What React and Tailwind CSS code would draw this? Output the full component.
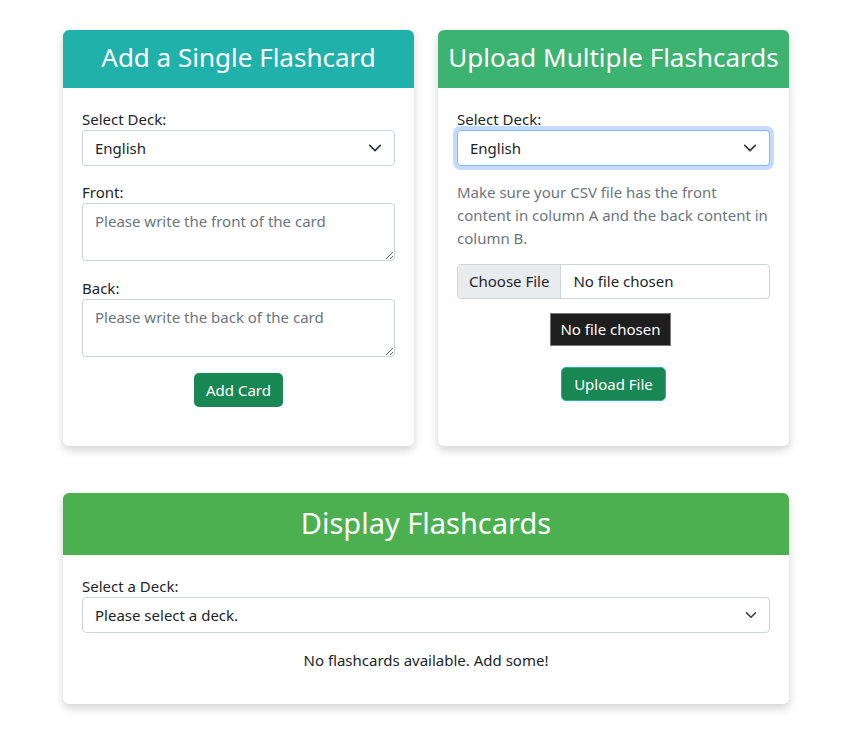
import { useState } from "react";

const font = { fontFamily: '"Noto Sans", "Noto Sans CJK KR", sans-serif' };

function Chevron({ small }) {
  return (
    <svg
      width={small ? 12 : 14}
      height={small ? 12 : 14}
      viewBox="0 0 16 16"
      className="pointer-events-none absolute right-[13px] top-1/2 -translate-y-1/2"
    >
      <path d="M2 5l6 6 6-6" fill="none" stroke="#343a40" strokeWidth="2" strokeLinecap="round" strokeLinejoin="round" />
    </svg>
  );
}

function Select({ value, focused, small }) {
  return (
    <div className="relative">
      <div
        className={
          "h-[36px] w-full rounded-[4px] border bg-white pl-[12px] text-[15px] leading-[34px] text-[#212529] " +
          (focused ? "border-[#86b7fe] shadow-[0_0_0_4px_rgba(13,110,253,0.25)]" : "border-[#ced4da]")
        }
      >
        {value}
      </div>
      <Chevron small={small} />
    </div>
  );
}

function Header({ title, color, big }) {
  return (
    <div
      className={
        "rounded-t-[6px] text-center text-white " +
        color + " " +
        (big ? "h-[62px] text-[29px] leading-[60px]" : "h-[58px] text-[26px] leading-[55px]")
      }
    >
      {title}
    </div>
  );
}

function SingleCard() {
  const [front, setFront] = useState("");
  const [back, setBack] = useState("");
  return (
    <div className="w-[351px] rounded-[6px] bg-white shadow-[0_4px_10px_rgba(0,0,0,0.18)]">
      <Header title="Add a Single Flashcard" color="bg-[#20b2aa]" />
      <div className="px-[19px] pb-[39px] pt-[20px]">
        <label className="block text-[15px] leading-[22px] text-[#212529]">Select Deck:</label>
        <Select value="English" />
        <label className="mt-[15px] block text-[15px] leading-[22px] text-[#212529]">Front:</label>
        <textarea
          value={front}
          onChange={(e) => setFront(e.target.value)}
          placeholder="Please write the front of the card"
          className="block h-[58px] w-full rounded-[4px] border border-[#ced4da] px-[12px] py-[6px] text-[15px] leading-[22px] placeholder:text-[#6c757d] outline-none"
        />
        <label className="mt-[16px] block text-[15px] leading-[22px] text-[#212529]">Back:</label>
        <textarea
          value={back}
          onChange={(e) => setBack(e.target.value)}
          placeholder="Please write the back of the card"
          className="block h-[58px] w-full rounded-[4px] border border-[#ced4da] px-[12px] py-[6px] text-[15px] leading-[22px] placeholder:text-[#6c757d] outline-none"
        />
        <div className="mt-[16px] flex justify-center">
          <button className="h-[34px] rounded-[5px] bg-[#198754] px-[12px] text-[15px] text-white">Add Card</button>
        </div>
      </div>
    </div>
  );
}

function UploadCard() {
  return (
    <div className="w-[351px] rounded-[6px] bg-white shadow-[0_4px_10px_rgba(0,0,0,0.18)]">
      <Header title="Upload Multiple Flashcards" color="bg-[#3cb371]" />
      <div className="px-[19px] pb-[44px] pt-[20px]">
        <label className="block text-[15px] leading-[22px] text-[#212529]">Select Deck:</label>
        <Select value="English" focused />
        <p className="mt-[15px] text-[15px] leading-[23px] text-[#6c757d]">
          Make sure your CSV file has the front content in column A and the back content in column B.
        </p>
        <div className="mt-[14px] flex h-[35px] overflow-hidden rounded-[4px] border border-[#ced4da] text-[15px] text-[#212529]">
          <div className="flex items-center border-r border-[#ced4da] bg-[#e9ecef] px-[11px]">Choose File</div>
          <div className="flex items-center px-[12px]">No file chosen</div>
        </div>
        <div className="mt-[15px] flex justify-center">
          <div className="ml-[-6px] h-[31px] bg-[#1e1e1e] px-[9px] text-[15px] leading-[31px] text-white outline outline-1 outline-[#777]">
            No file chosen
          </div>
        </div>
        <div className="mt-[22px] flex justify-center">
          <button className="h-[34px] rounded-[5px] border border-[#20b2aa] bg-[#198754] px-[12px] text-[15px] text-white">
            Upload File
          </button>
        </div>
      </div>
    </div>
  );
}

function DisplayCard() {
  return (
    <div className="w-[726px] rounded-[6px] bg-white shadow-[0_4px_10px_rgba(0,0,0,0.18)]">
      <Header title="Display Flashcards" color="bg-[#4caf50]" big />
      <div className="px-[19px] pb-[33px] pt-[20px]">
        <label className="block text-[15px] leading-[22px] text-[#212529]">Select a Deck:</label>
        <Select value="Please select a deck." small />
        <p className="mt-[16px] text-center text-[15px] leading-[22px] text-[#212529]">No flashcards available. Add some!</p>
      </div>
    </div>
  );
}

export default function App() {
  return (
    <div style={font} className="min-h-[733px] bg-white pl-[63px] pt-[30px]">
      <div className="flex gap-[24px]">
        <SingleCard />
        <UploadCard />
      </div>
      <div className="mt-[47px]">
        <DisplayCard />
      </div>
    </div>
  );
}
